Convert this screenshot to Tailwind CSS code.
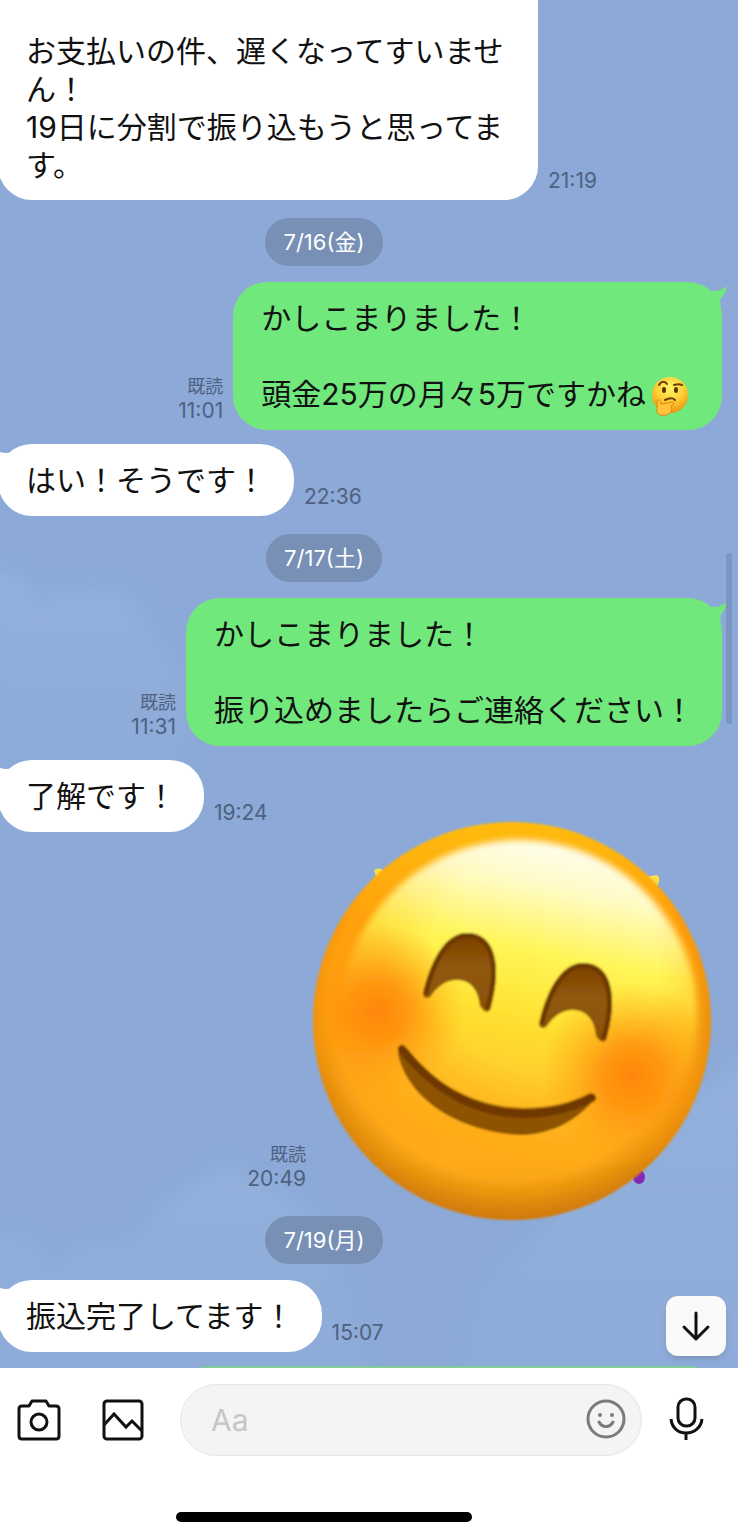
<!DOCTYPE html>
<html lang="ja">

<head>
    <meta charset="UTF-8">
    <meta name="viewport" content="width=device-width, initial-scale=1.0">
    <title>トーク</title>
    <script src="https://cdn.jsdelivr.net/npm/@tailwindcss/browser@4"></script>
</head>

<body class="flex min-h-screen flex-col bg-white font-['Inter','Noto_Sans_CJK_JP',sans-serif] text-[#111]">

    <!-- shared shapes -->
    <svg class="absolute size-0" aria-hidden="true">
        <symbol id="tail" viewBox="0 0 20 24">
            <path fill="currentColor" d="M0 6C6 8 13 7 19 2C18 8 15 12 12 16L13 22L0 16Z" />
        </symbol>
    </svg>

    <main class="relative flex-1 overflow-hidden bg-[#8ca9d8]">

        <!-- clouds -->
        <svg class="absolute inset-0 h-full w-full" viewBox="0 0 738 1368" preserveAspectRatio="xMidYMin slice" aria-hidden="true">
            <defs>
                <filter id="soft" x="-20%" y="-20%" width="140%" height="140%">
                    <feGaussianBlur stdDeviation="8" />
                </filter>
                <linearGradient id="cloud" x1="0" y1="0" x2="0" y2="1">
                    <stop offset="0" stop-color="#97b6dd" stop-opacity=".6" />
                    <stop offset="1" stop-color="#97b6dd" stop-opacity="0" />
                </linearGradient>
            </defs>
            <g fill="url(#cloud)" filter="url(#soft)">
                <path d="M-20 575C0 565 30 570 36 600C60 590 70 588 90 588C130 585 150 610 155 640C190 660 190 720 180 800L-20 800Z" />
                <path d="M-20 1238C10 1225 30 1240 55 1265C80 1235 115 1245 140 1240C155 1200 180 1190 225 1165C270 1180 310 1200 330 1240L380 1400L-20 1400Z" />
                <path d="M480 1300C560 1190 640 1130 760 1050L760 1500L450 1500Z" />
            </g>
        </svg>

        <ol class="relative flex flex-col">
            <li class="flex items-end gap-2.5">
                <p class="-ml-0.5 w-[540px] rounded-b-[34px] bg-white px-7 pt-8 pb-4 text-[30px]/[38px]">お支払いの件、遅くなってすいません！<br>19日に分割で振り込もうと思ってます。</p>
                <time class="pb-[7px] text-[21px]/[24px] text-[#4f6180]">21:19</time>
            </li>

            <li class="mt-[18px] flex justify-center pr-[90px]">
                <time class="rounded-full bg-[#7890b6] px-[18px] py-3 text-[22px]/[24px] text-white">7/16(金)</time>
            </li>

            <li class="mt-4 flex items-end justify-end gap-2.5 pr-4">
                <div class="flex flex-col items-end pb-[7px] text-[#4f6180]">
                    <span class="text-[18px]/[24px]">既読</span>
                    <time class="text-[21px]/[24px]">11:01</time>
                </div>
                <p class="relative rounded-[34px] bg-[#70e87c] px-7 py-[17px] text-[30px]/[38px]">
                    <svg class="absolute top-0.5 -right-1.5 h-6 w-5 text-[#70e87c]" aria-hidden="true"><use href="#tail" /></svg>
                    かしこまりました！<br><br>頭金25万の月々5万ですかね<svg class="mx-[5px] -my-2 inline-block h-10 w-[38px] align-middle" viewBox="0 0 38 40" role="img" aria-label="考える顔">
                        <defs>
                            <radialGradient id="think" cx=".5" cy=".3" r=".7">
                                <stop offset="0" stop-color="#fff36a" />
                                <stop offset=".55" stop-color="#ffcf34" />
                                <stop offset="1" stop-color="#ee9410" />
                            </radialGradient>
                        </defs>
                        <circle cx="19" cy="18" r="18" fill="url(#think)" />
                        <g fill="none" stroke="#6b3f08" stroke-width="2" stroke-linecap="round">
                            <path d="M8 8C10 4 14 4 16 7" />
                            <path d="M23 8C26 7 29 7 31 8" />
                            <path d="M14 23C18 21 22 21 24 23" />
                        </g>
                        <ellipse cx="13" cy="13" rx="2" ry="3" fill="#5a3406" />
                        <ellipse cx="25" cy="13" rx="2" ry="3" fill="#5a3406" />
                        <path d="M6 24C8 22 10 23 10 27L21 25C24 25 23 28 20 29C22 32 20 37 15 38C10 39 6 38 6 33Z" fill="#ffc23a" stroke="#d98710" />
                    </svg>
                </p>
            </li>

            <li class="mt-3.5 flex items-end gap-2.5">
                <p class="relative -ml-0.5 rounded-[34px] bg-white px-7 py-[17px] text-[30px]/[38px]">
                    <svg class="absolute top-0.5 -left-1.5 h-6 w-5 -scale-x-100 text-white" aria-hidden="true"><use href="#tail" /></svg>
                    はい！そうです！
                </p>
                <time class="pb-[7px] text-[21px]/[24px] text-[#4f6180]">22:36</time>
            </li>

            <li class="mt-[18px] flex justify-center pr-[90px]">
                <time class="rounded-full bg-[#7890b6] px-[18px] py-3 text-[22px]/[24px] text-white">7/17(土)</time>
            </li>

            <li class="mt-4 flex items-end justify-end gap-2.5 pr-4">
                <div class="flex flex-col items-end pb-[7px] text-[#4f6180]">
                    <span class="text-[18px]/[24px]">既読</span>
                    <time class="text-[21px]/[24px]">11:31</time>
                </div>
                <p class="relative rounded-[34px] bg-[#70e87c] px-7 py-[17px] text-[30px]/[38px]">
                    <svg class="absolute top-0.5 -right-1.5 h-6 w-5 text-[#70e87c]" aria-hidden="true"><use href="#tail" /></svg>
                    かしこまりました！<br><br>振り込めましたらご連絡ください！
                </p>
            </li>

            <li class="mt-3.5 flex items-end gap-2.5">
                <p class="relative -ml-0.5 rounded-[34px] bg-white px-7 py-[17px] text-[30px]/[38px]">
                    <svg class="absolute top-0.5 -left-1.5 h-6 w-5 -scale-x-100 text-white" aria-hidden="true"><use href="#tail" /></svg>
                    了解です！
                </p>
                <time class="pb-[7px] text-[21px]/[24px] text-[#4f6180]">19:24</time>
            </li>

            <!-- sticker, drawn larger than its row -->
            <li class="mt-3.5 flex items-end justify-end gap-2.5 pr-4">
                <div class="flex flex-col items-end pb-[7px] text-[#4f6180]">
                    <span class="text-[18px]/[24px]">既読</span>
                    <time class="text-[21px]/[24px]">20:49</time>
                </div>
                <svg class="h-[352px] w-[406px] overflow-visible" viewBox="316 846 406 352" role="img" aria-label="笑顔のスタンプ">
                    <defs>
                        <linearGradient id="base" x1="0" y1="0" x2="0" y2="1">
                            <stop offset="0" stop-color="#ffbc0c" />
                            <stop offset=".25" stop-color="#ffa00c" />
                            <stop offset=".6" stop-color="#ffa616" />
                            <stop offset=".85" stop-color="#ffaa16" />
                            <stop offset="1" stop-color="#f6a012" />
                        </linearGradient>
                        <linearGradient id="shine" gradientUnits="userSpaceOnUse" x1="560" y1="842" x2="500" y2="1150">
                            <stop offset="0" stop-color="#fffef0" />
                            <stop offset=".15" stop-color="#fffbc4" />
                            <stop offset=".36" stop-color="#fff556" />
                            <stop offset=".58" stop-color="#ffe030" />
                            <stop offset=".82" stop-color="#ffc92c" />
                            <stop offset="1" stop-color="#ffae1a" />
                        </linearGradient>
                        <radialGradient id="spread" gradientUnits="userSpaceOnUse" cx="545" cy="960" r="225">
                            <stop offset=".5" stop-color="#fff" />
                            <stop offset="1" stop-color="#fff" stop-opacity="0" />
                        </radialGradient>
                        <linearGradient id="cap" x1="0" y1="0" x2="0" y2="1">
                            <stop offset="0" stop-color="#fff" />
                            <stop offset=".25" stop-color="#fff" stop-opacity=".5" />
                            <stop offset=".5" stop-color="#fff" stop-opacity="0" />
                        </linearGradient>
                        <mask id="glow" maskUnits="userSpaceOnUse" x="300" y="800" width="430" height="430">
                            <circle cx="518" cy="1020" r="186" fill="url(#spread)" />
                            <circle cx="518" cy="1020" r="186" fill="url(#cap)" />
                        </mask>
                        <radialGradient id="rim" gradientUnits="userSpaceOnUse" cx="512" cy="998" r="226">
                            <stop offset=".8" stop-color="#b86200" stop-opacity="0" />
                            <stop offset="1" stop-color="#b86200" stop-opacity=".7" />
                        </radialGradient>
                        <radialGradient id="cheek">
                            <stop offset="0" stop-color="#ff850a" />
                            <stop offset=".35" stop-color="#ff8d0c" stop-opacity=".8" />
                            <stop offset=".7" stop-color="#ff980e" stop-opacity=".35" />
                            <stop offset="1" stop-color="#ff9c10" stop-opacity="0" />
                        </radialGradient>
                        <linearGradient id="brown" x1="0" y1="0" x2="0" y2="1">
                            <stop offset="0" stop-color="#7a3f00" />
                            <stop offset=".45" stop-color="#91590a" />
                            <stop offset="1" stop-color="#8a5005" />
                        </linearGradient>
                        <filter id="blur1" x="-10%" y="-10%" width="120%" height="120%">
                            <feGaussianBlur stdDeviation="1" />
                        </filter>
                        <filter id="blur3" x="-10%" y="-10%" width="120%" height="120%">
                            <feGaussianBlur stdDeviation="3" />
                        </filter>
                        <clipPath id="face">
                            <circle cx="512" cy="1021" r="199" />
                        </clipPath>
                        <clipPath id="eyeClip">
                            <path d="M423 994C430 962 445 933 467 933C495 933 503 965 490 1010Q486 1015 480 1006C478 987 468 979 455 980C444 981 437 987 430 997Q424 1000 423 994Z" />
                        </clipPath>
                    </defs>
                    <path d="M374 870Q379 867 383 870L388 876L377 880Z" fill="#f7e04a" />
                    <path d="M644 877L657 875Q661 877 658 885L650 886Z" fill="#f7e04a" />
                    <ellipse cx="639" cy="1177" rx="6" ry="7" fill="#8428b8" />
                    <g filter="url(#blur1)">
                        <circle cx="512" cy="1021" r="199" fill="url(#base)" />
                        <g mask="url(#glow)">
                            <circle cx="519" cy="1019" r="179" fill="url(#shine)" filter="url(#blur3)" />
                        </g>
                        <circle cx="512" cy="1021" r="199" fill="url(#rim)" />
                        <g clip-path="url(#face)">
                            <circle cx="378" cy="1011" r="86" fill="url(#cheek)" />
                            <circle cx="632" cy="1075" r="92" fill="url(#cheek)" />
                        </g>
                        <g id="eye">
                            <path d="M423 994C430 962 445 933 467 933C495 933 503 965 490 1010Q486 1015 480 1006C478 987 468 979 455 980C444 981 437 987 430 997Q424 1000 423 994Z" fill="url(#brown)" />
                            <path d="M423 994C430 962 445 933 467 933C495 933 503 965 490 1010" fill="none" stroke="#6e3700" stroke-width="10" clip-path="url(#eyeClip)" />
                        </g>
                        <use href="#eye" x="116" y="30" />
                        <path d="M398 1048C400 1043 406 1046 410 1052C440 1089 480 1107 523 1108C550 1108 570 1103 588 1094C594 1091 597 1096 592 1102C572 1125 545 1135 520 1135C460 1132 408 1100 398 1054Z" fill="#8d5303" />
                        <path d="M402 1049C440 1096 480 1113 523 1114C550 1114 572 1108 592 1098" fill="none" stroke="#6e3700" stroke-width="8" stroke-linecap="round" />
                    </g>
                </svg>
            </li>

            <li class="mt-[18px] flex justify-center pr-[90px]">
                <time class="rounded-full bg-[#7890b6] px-[18px] py-3 text-[22px]/[24px] text-white">7/19(月)</time>
            </li>

            <li class="mt-4 flex items-end gap-2.5">
                <p class="relative -ml-0.5 rounded-[34px] bg-white px-7 py-[17px] text-[30px]/[38px]">
                    <svg class="absolute top-0.5 -left-1.5 h-6 w-5 -scale-x-100 text-white" aria-hidden="true"><use href="#tail" /></svg>
                    振込完了してます！
                </p>
                <time class="pb-[7px] text-[21px]/[24px] text-[#4f6180]">15:07</time>
            </li>

            <!-- next message, only its top edge shows -->
            <li class="mt-3.5 flex h-0.5 justify-end overflow-hidden pr-4">
                <div class="h-[72px] w-[546px] rounded-[34px] bg-[#7fd092]"></div>
            </li>
        </ol>

        <!-- scroll position -->
        <div class="absolute top-[553px] right-1.5 h-[171px] w-1.5 rounded-full bg-[#7b96c2]"></div>

        <button type="button" aria-label="最新のメッセージへ" class="absolute right-3 bottom-3 flex size-[60px] items-center justify-center rounded-xl bg-[#fafafa] shadow-md">
            <svg class="size-8" viewBox="0 0 32 32" fill="none" stroke="#111" stroke-width="3" stroke-linecap="round" stroke-linejoin="round">
                <path d="M16 3V29M4 17L16 29L28 17" />
            </svg>
        </button>
    </main>

    <footer class="bg-white pt-4 pb-4">
        <form class="flex items-center pr-[30px] pl-4">
            <button type="button" aria-label="カメラ" class="mr-[38px]">
                <svg class="size-[46px]" viewBox="0 0 46 46" fill="none" stroke="#111" stroke-width="3" stroke-linejoin="round">
                    <path d="M6 9H13L16 4H30L33 9H40Q43 9 43 12V39Q43 42 40 42H6Q3 42 3 39V12Q3 9 6 9Z" />
                    <circle cx="23" cy="25" r="8" />
                </svg>
            </button>
            <button type="button" aria-label="写真" class="mr-[34px]">
                <svg class="size-[46px]" viewBox="0 0 46 46" fill="none" stroke="#111" stroke-width="3">
                    <rect x="4" y="4" width="38" height="38" rx="3" />
                    <path d="M4 28L14 17L26 30L32 24L42 34" />
                </svg>
            </button>
            <div class="flex h-[72px] min-w-0 flex-1 items-center rounded-full border border-[#e6e6e6] bg-[#f4f4f4] pr-3.5 pl-[30px]">
                <input type="text" aria-label="メッセージ" placeholder="Aa" class="min-w-0 flex-1 bg-transparent text-[30px]/[38px] outline-none placeholder:text-[#c6c6c6]">
                <button type="button" aria-label="スタンプ">
                    <svg class="size-[42px]" viewBox="0 0 42 42" fill="none" stroke="#7a7a7a" stroke-width="3" stroke-linecap="round">
                        <circle cx="21" cy="20" r="18" />
                        <path d="M14 23C17 29 25 29 28 23" />
                        <circle cx="15" cy="16" r="2" fill="#7a7a7a" stroke="none" />
                        <circle cx="27" cy="16" r="2" fill="#7a7a7a" stroke="none" />
                    </svg>
                </button>
            </div>
            <button type="button" aria-label="音声メッセージ" class="ml-6">
                <svg class="h-[46px] w-[42px]" viewBox="0 0 42 46" fill="none" stroke="#111" stroke-width="3">
                    <rect x="12" y="2" width="17" height="27" rx="8" />
                    <path d="M5 22C6 31 12 36 20 36C28 36 35 31 36 22M20 36V43" />
                </svg>
            </button>
        </form>
        <div class="mt-14 flex justify-center pr-[90px]">
            <div class="h-2.5 w-[296px] rounded-full bg-black"></div>
        </div>
    </footer>
</body>

</html>
